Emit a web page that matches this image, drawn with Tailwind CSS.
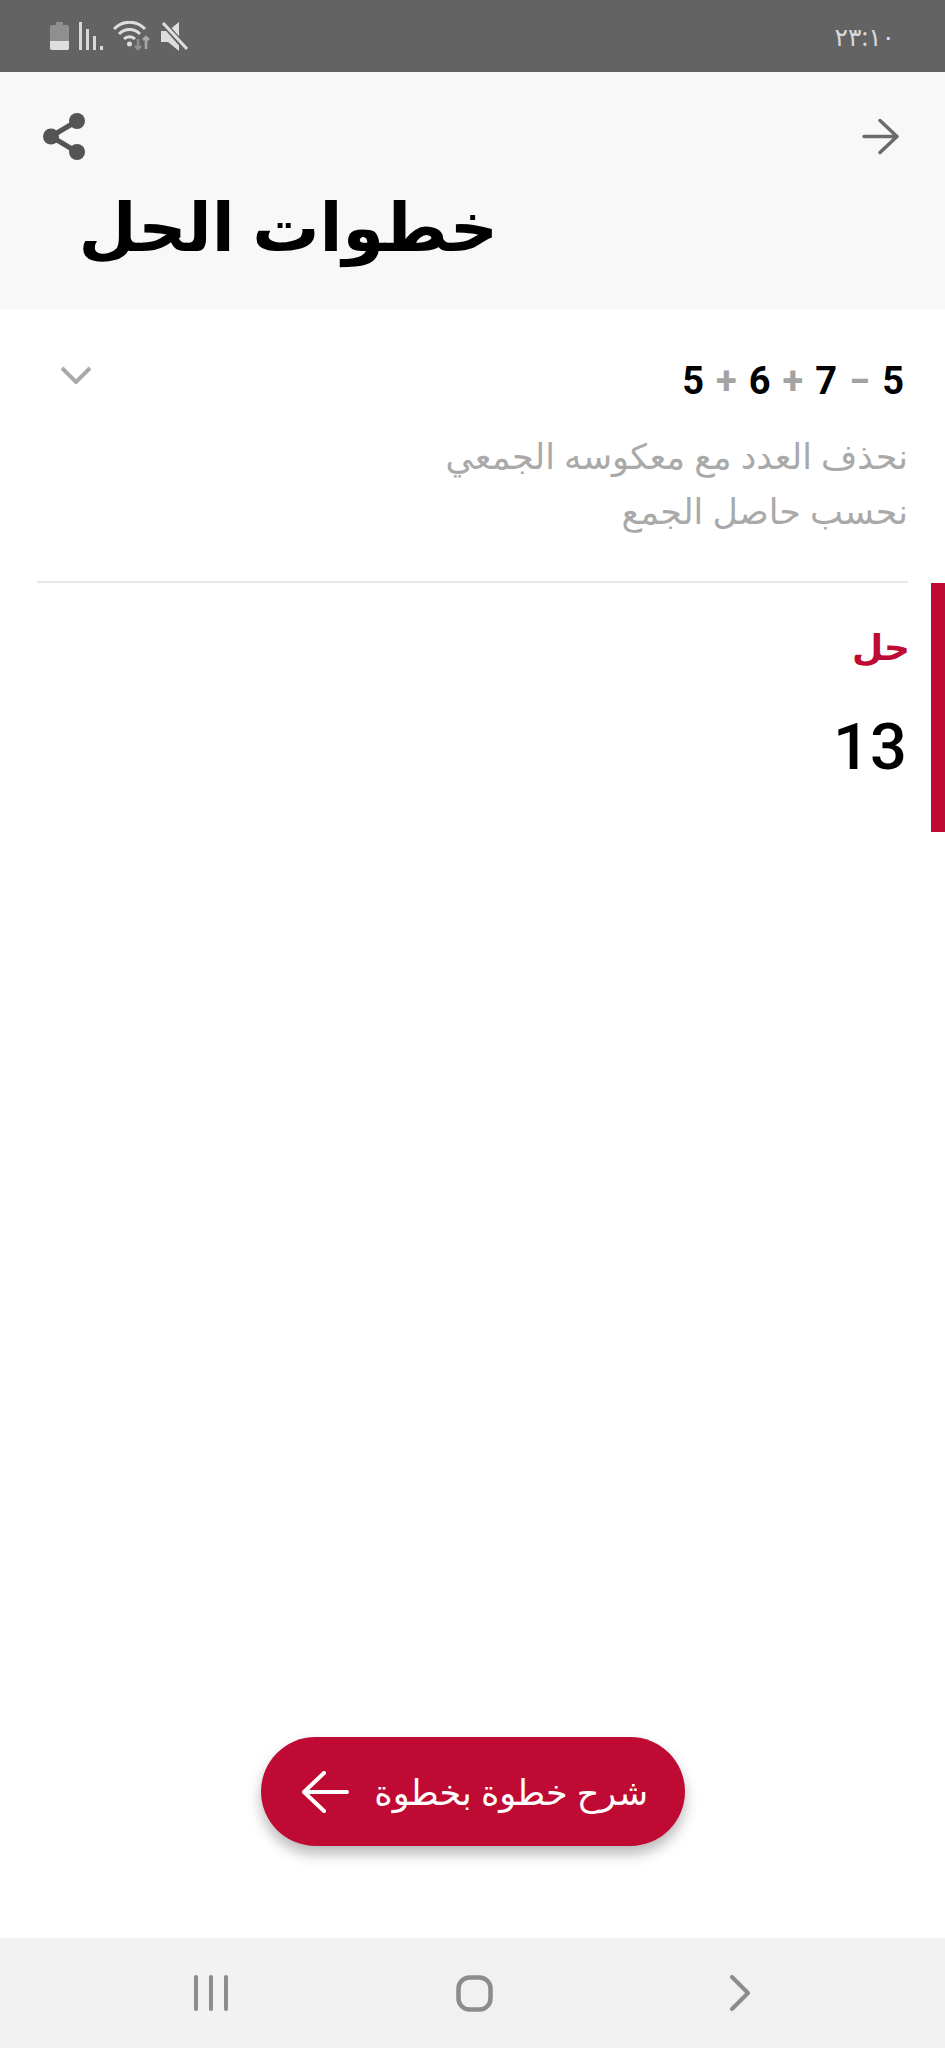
<!DOCTYPE html>
<html lang="ar" dir="rtl">
<head>
    <meta charset="UTF-8">
    <meta name="viewport" content="width=device-width, initial-scale=1.0">
    <title>خطوات الحل</title>
    <script src="https://cdn.jsdelivr.net/npm/@tailwindcss/browser@4"></script>
</head>
<body class="bg-white font-['Noto_Sans','DejaVu_Sans',sans-serif]">
    <div class="relative flex flex-col w-[945px] h-[2048px] overflow-hidden">
        <!-- status bar -->
        <div class="flex items-center justify-between h-[72px] pr-[50px] pl-[50px] bg-[#636363] shrink-0">
            <span class="text-[25px] leading-none text-[#d8d8d8]">٢٣:١٠</span>
            <div dir="ltr" class="flex items-center gap-[10px]">
                <svg width="19" height="28" viewBox="0 0 19 28"><path d="M6 0h7v3h4a2 2 0 0 1 2 2v21a2 2 0 0 1-2 2H2a2 2 0 0 1-2-2V5a2 2 0 0 1 2-2h4z" fill="#8f8f8f"/><path d="M0 19h19v7a2 2 0 0 1-2 2H2a2 2 0 0 1-2-2z" fill="#dedede"/></svg>
                <svg width="24" height="28" viewBox="0 0 24 28" fill="#d8d8d8"><rect x="0" y="0" width="3" height="28"/><rect x="7" y="7" width="3" height="21"/><rect x="14" y="14" width="3" height="14"/><rect x="21" y="24" width="3" height="4"/></svg>
                <svg width="38" height="30" viewBox="0 0 38 30" fill="none"><path d="M1 8c9-9 22-9 31 0M6 13c6-6 15-6 21 0M11 18c3-3 8-3 11 0" stroke="#dedede" stroke-width="3"/><circle cx="16.500" cy="23" r="2.500" fill="#dedede"/><path d="M25 18v10M22 25l3 3 3-3" stroke="#8f8f8f" stroke-width="2.500"/><path d="M33 28V16M30 19l3-3 3 3" stroke="#a8a8a8" stroke-width="2.500"/></svg>
                <svg width="27" height="29" viewBox="0 0 27 29"><path d="M0 9h7L18 0v29L7 20H0z" fill="#dedede"/><path d="M3 2l23 26" stroke="#636363" stroke-width="6"/><path d="M2 1l24 26" stroke="#dedede" stroke-width="3"/></svg>
            </div>
        </div>

        <!-- header -->
        <header class="h-[237px] shrink-0 bg-[#f8f8f8] pt-[41px] pr-[46px] pl-[43px]">
            <div class="flex items-start justify-between">
                <svg class="mt-[5px]" width="37" height="37" viewBox="0 0 37 37" fill="none" stroke="#6b6b6b" stroke-width="3.500" stroke-linecap="round" stroke-linejoin="round"><path d="M35 18.500H2M18 2.500l17 16-17 16"/></svg>
                <svg width="42" height="47" viewBox="0 0 42 47"><path d="M34 8 8 23.500 34 39" fill="none" stroke="#545454" stroke-width="5"/><circle cx="34" cy="8" r="8" fill="#545454"/><circle cx="8" cy="23.500" r="8" fill="#545454"/><circle cx="34" cy="39" r="8" fill="#545454"/></svg>
            </div>
            <h1 class="mt-[17px] w-fit mr-[401px] text-[67px] leading-[96px] font-bold text-black whitespace-nowrap">خطوات الحل</h1>
        </header>

        <!-- steps -->
        <main class="flex-1">
            <div class="mx-[37px] h-[274px] border-b-2 border-[#e8e8e8] pt-[48px]">
                <div class="flex items-center justify-between h-[48px]">
                    <div dir="ltr" class="mr-[4px] flex items-center gap-[12px] text-[38px] leading-none font-bold text-black font-['Roboto',sans-serif]">
                        <span>5</span><span class="text-[#a3a3a3]">+</span><span>6</span><span class="text-[#a3a3a3]">+</span><span>7</span><span class="text-[#a3a3a3]">−</span><span>5</span>
                    </div>
                    <svg class="ml-[23px] mb-[13px]" width="32" height="18" viewBox="0 0 32 18" fill="none" stroke="#a9a9a9" stroke-width="4"><path d="M2 2l14 14L30 2"/></svg>
                </div>
                <div class="mt-[23px] text-[35px] leading-[55px] text-[#a9a9a9]">
                    <p>نحذف العدد مع معكوسه الجمعي</p>
                    <p>نحسب حاصل الجمع</p>
                </div>
            </div>
            <div class="h-[249px] border-r-[14px] border-[#bf0b33] pr-[21px] pt-[34px]">
                <p class="text-[36px] leading-[60px] font-bold text-[#bf0b33]">حل</p>
                <p class="mt-[32px] mr-[3px] text-[65px] leading-[76px] font-medium text-black font-['Roboto',sans-serif]">13</p>
            </div>
        </main>

        <!-- floating button -->
        <button class="absolute top-[1737px] left-[261px] flex items-center justify-between w-[424px] h-[109px] pr-[37px] pl-[40px] rounded-full bg-[#bf0b33] shadow-[0_8px_14px_rgba(0,0,0,0.28)]">
            <span class="text-[35px] leading-none text-white whitespace-nowrap">شرح خطوة بخطوة</span>
            <svg width="48" height="42" viewBox="0 0 48 42" fill="none" stroke="#ffffff" stroke-width="4" stroke-linecap="round" stroke-linejoin="round"><path d="M46 21H3M23 2 3 21l20 19"/></svg>
        </button>

        <!-- nav bar -->
        <nav dir="ltr" class="flex items-center justify-between h-[110px] shrink-0 bg-[#f1f1f1] pl-[194px] pr-[195px]">
            <svg width="34" height="36" viewBox="0 0 34 36" fill="#8c8c8c"><rect x="0" y="0" width="4" height="36" rx="2"/><rect x="15" y="0" width="4" height="36" rx="2"/><rect x="30" y="0" width="4" height="36" rx="2"/></svg>
            <svg class="mr-[8px]" width="37" height="37" viewBox="0 0 37 37" fill="none" stroke="#8c8c8c" stroke-width="4.500"><rect x="2.500" y="2.500" width="32" height="32" rx="11"/></svg>
            <svg width="21" height="36" viewBox="0 0 21 36" fill="none" stroke="#8c8c8c" stroke-width="4" stroke-linecap="round" stroke-linejoin="round"><path d="M3 2l16 16L3 34"/></svg>
        </nav>
    </div>
</body>
</html>
